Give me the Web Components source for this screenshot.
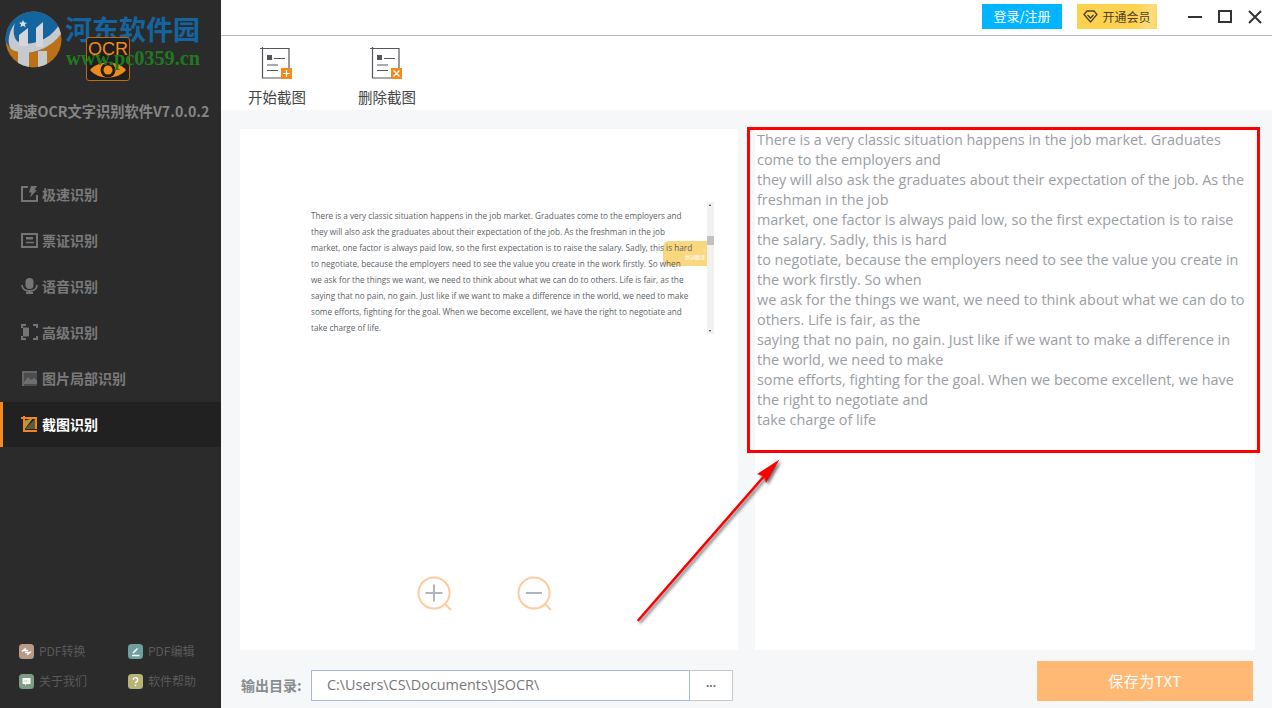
<!DOCTYPE html>
<html lang="zh">
<head>
<meta charset="utf-8">
<title>捷速OCR文字识别软件</title>
<style>
html,body{margin:0;padding:0;height:100%;overflow:hidden;background:#f6f7f9}
body{font-family:"Noto Sans CJK SC","Noto Sans",sans-serif}
</style>
</head>
<body>
<ocr-app>
  <side-bar slot="side">
    <nav-item label="极速识别" icon="fast"></nav-item>
    <nav-item label="票证识别" icon="card"></nav-item>
    <nav-item label="语音识别" icon="mic"></nav-item>
    <nav-item label="高级识别" icon="adv"></nav-item>
    <nav-item label="图片局部识别" icon="pic"></nav-item>
    <nav-item label="截图识别" icon="crop" active></nav-item>
  </side-bar>
  <title-bar slot="main"></title-bar>
  <tool-bar slot="main">
    <tool-button label="开始截图" kind="add"></tool-button>
    <tool-button label="删除截图" kind="del"></tool-button>
  </tool-bar>
  <work-area slot="main">
    <preview-panel></preview-panel>
    <result-panel>
There is a very classic situation happens in the job market. Graduates come to the employers and<br>they will also ask the graduates about their expectation of the job. As the freshman in the job<br>market, one factor is always paid low, so the first expectation is to raise the salary. Sadly, this is hard<br>to negotiate, because the employers need to see the value you create in the work firstly. So when<br>we ask for the things we want, we need to think about what we can do to others. Life is fair, as the<br>saying that no pain, no gain. Just like if we want to make a difference in the world, we need to make<br>some efforts, fighting for the goal. When we become excellent, we have the right to negotiate and<br>take charge of life
    </result-panel>
  </work-area>
  <foot-bar slot="main"></foot-bar>
</ocr-app>

<script>
function tpl(html){const t=document.createElement('template');t.innerHTML=html;return t;}
function def(name,html,init){
  const t=tpl(html);
  customElements.define(name,class extends HTMLElement{
    connectedCallback(){
      if(this.shadowRoot)return;
      const r=this.attachShadow({mode:'open'});
      r.appendChild(t.content.cloneNode(true));
      if(init)init.call(this,r);
    }
  });
}

def('ocr-app',`<style>
:host{display:grid;grid-template-columns:221px 1051px;width:1272px;height:708px;position:relative;overflow:hidden}
.main{display:flex;flex-direction:column;min-width:0;background:#f6f7f9}
.side{display:block;min-width:0}
.redbox{position:absolute;left:747px;top:127px;width:507px;height:320px;border:3px solid #f00;pointer-events:none}
.arrow{position:absolute;left:620px;top:440px;overflow:visible;pointer-events:none}
</style>
<div class="side"><slot name="side"></slot></div>
<div class="main"><slot name="main"></slot></div>
<div class="redbox"></div>
<svg class="arrow" width="180" height="190" viewBox="620 440 180 190" style="filter:drop-shadow(2px 2px 1.5px rgba(0,0,0,.55))">
  <path d="M638.5 620 L766 474" stroke="#f00" stroke-width="2.6" stroke-linecap="round" fill="none"/>
  <path d="M779.5 459.5 L757 474 L764 476.5 L766 483 Z" fill="#f00"/>
</svg>`);

def('side-bar',`<style>
:host{display:flex;flex-direction:column;width:221px;height:708px;background:#2b2b2b;position:relative;box-sizing:border-box}
.brand{height:171px;box-sizing:border-box;padding-top:100px;padding-left:9px;flex:none}
.title{font:700 14.250px/22px "Noto Sans CJK SC","Liberation Sans",sans-serif;color:#858585;white-space:nowrap}
.nav{flex:1;display:block}
.links{display:grid;grid-template-columns:109px 90px;grid-auto-rows:30px;padding:0 0 12px 19px;flex:none}
.link{display:flex;align-items:center;gap:5px;font:12px/16px "Noto Sans CJK SC","Liberation Sans",sans-serif;color:#5a5a5a;white-space:nowrap}
.logo{position:absolute;left:5px;top:11px}
.ocr{position:absolute;left:86px;top:37px;width:44px;height:44px;box-sizing:border-box;border:1px solid #c0690f;border-radius:3px;background:#1f1f1f;text-align:center;overflow:hidden}
.ocr b{display:block;font:400 18px/18px "Liberation Sans",sans-serif;color:#f08a1c;margin-top:2px;white-space:nowrap}
.ocr svg{display:block;margin:2px auto 0}
.wm1{position:absolute;left:65px;top:11px;font:700 27px/36px "Noto Sans CJK SC",sans-serif;color:#14659f;white-space:nowrap;letter-spacing:0}
.wm2{position:absolute;left:66px;top:47px;font:700 20.300px/22px "Liberation Serif",serif;color:#1f7a1f;white-space:nowrap}
svg{display:block;flex:none}
</style>
<div class="brand"><div class="title">捷速OCR文字识别软件V7.0.0.2</div></div>
<div class="nav"><slot></slot></div>
<div class="links">
  <div class="link"><svg width="15" height="15" viewBox="0 0 15 15"><rect width="15" height="15" rx="3.5" fill="#b89a86"/><path d="M3 7.500 6 5v1.500h3M12 7.500 9 10V8.500H6" stroke="#fff" stroke-width="1.500" fill="none"/></svg>PDF转换</div>
  <div class="link"><svg width="15" height="15" viewBox="0 0 15 15"><rect width="15" height="15" rx="3.500" fill="#6f9f9f"/><path d="M4 11.500h7.500M5 9l4.500-4.500" stroke="#fff" stroke-width="1.500" fill="none"/></svg>PDF编辑</div>
  <div class="link"><svg width="15" height="15" viewBox="0 0 15 15"><rect width="15" height="15" rx="3.500" fill="#7d9c85"/><path d="M3.500 4h8v6h-4L6 11.800V10H3.500Z" fill="#fff"/><path d="M5.500 7h4" stroke="#7d9c85" stroke-dasharray="1 .8"/></svg>关于我们</div>
  <div class="link"><svg width="15" height="15" viewBox="0 0 15 15"><rect width="15" height="15" rx="3.500" fill="#b8b478"/><path d="M5.300 5.800a2.200 2.200 0 1 1 3.400 1.800c-.8.500-1.200.9-1.200 1.700" stroke="#fff" stroke-width="1.400" fill="none"/><circle cx="7.500" cy="11.300" r=".9" fill="#fff"/></svg>软件帮助</div>
</div>
<svg class="logo" width="57" height="57" viewBox="0 0 57 57">
  <defs><clipPath id="c"><circle cx="28.500" cy="28.500" r="28"/></clipPath></defs>
  <g clip-path="url(#c)">
    <rect width="57" height="57" fill="#bb7115"/>
    <path d="M0 0H57V20C44 42 18 46 6 38L0 30Z" fill="#14659f"/>
    <path d="M10 12C3 22 2 32 6 38 18 46 44 42 58 20L55 12C46 30 22 37 12 30 8 26 8 18 10 12Z" fill="#c6c9ce"/>
    <rect x="13" y="40" width="11" height="18" fill="#c6c9ce"/>
    <rect x="33" y="40" width="9" height="18" fill="#c6c9ce"/>
    <path d="M14 24l9-7V35H14Z" fill="#d4d6da"/>
    <path d="M31 17l7-6V36H31Z" fill="#d4d6da"/>
    <path d="M18 9l1.200 2.500 2.800.2-2.100 1.800.7 2.700-2.600-1.500-2.600 1.500.7-2.700-2.100-1.800 2.800-.2Z" fill="#d8dde2"/>
  </g>
</svg>
<div class="wm1">河东软件园</div>
<div class="ocr"><b>OCR</b><svg width="38" height="20" viewBox="0 0 38 20"><path d="M1 10C9 0 29 0 37 10 29 20 9 20 1 10Z" fill="#f08a1c"/><circle cx="19" cy="10" r="7.500" fill="#1f1f1f"/><circle cx="19" cy="10" r="4.500" fill="#f08a1c"/></svg></div>
<div class="wm2">www.pc0359.cn</div>`);

const navIcons={
 fast:'<path d="M7 1H1v14h15V9" stroke="#757575" stroke-width="2" fill="none"/><path d="M10 0h6l-2.500 4H16l-7 7.500L10.500 6.500H8Z" fill="#757575"/>',
 card:'<rect x="1" y="2" width="15" height="13" fill="none" stroke="#757575" stroke-width="2"/><rect x="5" y="5" width="7" height="2.500" fill="#757575"/><path d="M5 10.500h8" stroke="#757575" stroke-width="1.500"/>',
 mic:'<rect x="4.500" y="0" width="8" height="11" rx="4" fill="#757575"/><path d="M1 7c0 8 15 8 15 0" fill="none" stroke="#757575" stroke-width="1.800"/><path d="M8.500 12v3M5 15h7" stroke="#757575" stroke-width="2"/>',
 adv:'<path d="M5 1H1v3M1 12v3h4M12 1h4v3M16 12v3h-4" fill="none" stroke="#757575" stroke-width="2"/><rect x="2" y="3.500" width="6" height="9" fill="#757575"/>',
 pic:'<path d="M1 1h15v15H1Z" fill="#4d4d4d"/><path d="M1 1h15v2H3v13H1Z" fill="#666"/><path d="M3 12l4-5 3 3 3-2 3 2v4H3Z" fill="#6e6e6e"/>',
 crop:'<path d="M3 14V5l9-3z" fill="#b39a35"/><path d="M4 13 14 3v10Z" fill="#5e5c32"/><path d="M3 0v15h13M0 2h15v11" fill="none" stroke="#f0871c" stroke-width="2"/>'
};
def('nav-item',`<style>
:host{display:block;height:46px;box-sizing:border-box}
.row{display:flex;align-items:center;height:100%;padding:0 0 0 21px;gap:4px;font:700 14px/20px "Noto Sans CJK SC","Liberation Sans",sans-serif;color:#7a7a7a;white-space:nowrap;box-sizing:border-box}
:host([active]) .row{background:#212121;color:#fff;border-left:3px solid #f58a1f;padding:0 0 2px 18px}
:host([active]){height:45px;margin-top:1px}
svg{display:block;flex:none}
</style><div class="row"><svg width="17" height="16" viewBox="0 0 17 16"></svg><span></span></div>`,function(r){
  r.querySelector('span').textContent=this.getAttribute('label');
  r.querySelector('svg').innerHTML=navIcons[this.getAttribute('icon')];
});

def('title-bar',`<style>
:host{display:flex;align-items:flex-start;height:36px;box-sizing:border-box;background:#fff;border-bottom:1px solid #b4bccc;padding:4px 9px 0 761px;flex:none}
.login{width:80px;height:25px;background:#00b4ff;color:#fff;font:13px/23px "Noto Sans CJK SC",sans-serif;text-align:center;flex:none}
.vip{width:80px;height:25px;margin-left:15px;background:linear-gradient(100deg,#fed24c 70%,#fedc7d 90%,#fed65c);color:#4a4030;font:12px/23px "Noto Sans CJK SC",sans-serif;display:flex;align-items:center;justify-content:center;gap:4px;flex:none;padding-bottom:1px;box-sizing:border-box}
.ctrls{display:flex;margin-left:30px;gap:14px;padding-top:6px}
svg{display:block;flex:none}
</style>
<div class="login">登录/注册</div>
<div class="vip"><svg width="15" height="13" viewBox="0 0 15 13"><path d="M4 1h7l3 3.500-6.500 7.500L1 4.500Z" fill="none" stroke="#4a4030" stroke-width="1.300"/><path d="M4.500 5l3 3 3-3" fill="none" stroke="#4a4030" stroke-width="1.300"/></svg>开通会员</div>
<div class="ctrls">
<svg width="16" height="14" viewBox="0 0 16 14"><path d="M1 7h14" stroke="#333" stroke-width="2"/></svg>
<svg width="16" height="14" viewBox="0 0 16 14"><rect x="2" y="1" width="12" height="11" fill="none" stroke="#333" stroke-width="2"/></svg>
<svg width="16" height="14" viewBox="0 0 16 14"><path d="M2 1l12 12M14 1L2 13" stroke="#333" stroke-width="2"/></svg>
</div>`);

def('tool-bar',`<style>
:host{display:flex;height:74px;background:#fff;padding-left:1px;flex:none}
</style><slot></slot>`);

def('tool-button',`<style>
:host{display:flex;flex-direction:column;align-items:center;width:110px;padding-top:11px;box-sizing:border-box;font:14.500px/20px "Noto Sans CJK SC",sans-serif;color:#444}
svg{display:block;margin-left:-3px}
span{margin-top:7px;white-space:nowrap}
</style>
<svg width="34" height="33" viewBox="0 0 34 33">
 <path d="M1 1.500h4M3.500 0v31H30V1.500H5" fill="none" stroke="#55565c" stroke-width="1.200"/>
 <rect x="8" y="8" width="5" height="5" fill="#55565c"/>
 <path d="M15 11.500h11M8 18h11M8 23.500h11" stroke="#55565c" stroke-width="1.200"/>
 <rect x="22" y="21" width="11" height="11" fill="#f5891f"/>
 <path class="g" stroke="#fff" stroke-width="1.200" fill="none"/>
</svg><span></span>`,function(r){
  r.querySelector('span').textContent=this.getAttribute('label');
  r.querySelector('.g').setAttribute('d',this.getAttribute('kind')==='add'?'M27.500 23v7M24 26.500h7':'M24.500 23.500l6 6M30.500 23.500l-6 6');
});

def('work-area',`<style>
:host{display:flex;gap:17px;padding:19px 17px 0 19px;flex:1;min-height:0;box-sizing:border-box}
</style><slot></slot>`);

def('preview-panel',`<style>
:host{display:flex;flex-direction:column;width:498px;background:#fff;box-sizing:border-box;padding:73px 0 38px 71px;flex:none;position:relative}
.doc{display:flex;height:132px;position:relative}
.txt{width:396px;padding-top:6px;box-sizing:border-box;font:8.200px/16px "Open Sans","Noto Sans",sans-serif;color:#5c5f66;white-space:nowrap;flex:none;position:relative;z-index:1}
.bar{width:7px;background:#f1f1f1;position:relative;flex:none}
.bar i{position:absolute;left:0;top:34px;width:7px;height:9px;background:#c1c1c1}
.bar::before{content:"";position:absolute;left:2px;top:2px;border:1.500px solid transparent;border-bottom:2px solid #333;border-top:0}
.bar::after{content:"";position:absolute;left:2px;bottom:2px;border:1.500px solid transparent;border-top:2px solid #333;border-bottom:0}
.tab{position:absolute;left:352px;top:39px;width:44px;height:25px;background:#f9d77e;border-radius:6px 0 0 6px;color:#fff;font:5px/7px "Noto Sans CJK SC",sans-serif;text-align:right;padding:5px 2px 0 0;box-sizing:border-box;white-space:nowrap}
.zoom{display:flex;gap:64px;margin-top:auto;padding-left:106px}
svg{display:block}
</style>
<div class="doc">
<div class="txt">There is a very classic situation happens in the job market. Graduates come to the employers and<br>they will also ask the graduates about their expectation of the job. As the freshman in the job<br>market, one factor is always paid low, so the first expectation is to raise the salary. Sadly, this is hard<br>to negotiate, because the employers need to see the value you create in the work firstly. So when<br>we ask for the things we want, we need to think about what we can do to others. Life is fair, as the<br>saying that no pain, no gain. Just like if we want to make a difference in the world, we need to make<br>some efforts, fighting for the goal. When we become excellent, we have the right to negotiate and<br>take charge of life.</div>
<div class="bar"><i></i></div>
<div class="tab">:<br>划词翻译</div>
</div>
<div class="zoom">
<svg width="36" height="36" viewBox="0 0 36 36"><circle cx="17" cy="17" r="15.500" fill="none" stroke="#ffcb9c" stroke-width="2"/><path d="M28 28l6 6" stroke="#ffcb9c" stroke-width="2"/><path d="M8.500 17h17M17 8.500v17" stroke="#b0b4bc" stroke-width="2"/></svg>
<svg width="36" height="36" viewBox="0 0 36 36"><circle cx="17" cy="17" r="15.500" fill="none" stroke="#ffcb9c" stroke-width="2"/><path d="M28 28l6 6" stroke="#ffcb9c" stroke-width="2"/><path d="M9 17h16" stroke="#b0b4bc" stroke-width="2"/></svg>
</div>`);

def('result-panel',`<style>
:host{display:block;width:500px;background:#fff;box-sizing:border-box;padding:1px 3px 0 2px;font:14.400px/20px "Open Sans","Noto Sans",sans-serif;color:#9a9da3;flex:none}
</style><slot></slot>`);

def('foot-bar',`<style>
:host{display:flex;height:58px;box-sizing:border-box;padding:20px 19px 7px 20px;flex:none;align-items:flex-start}
.lab{font:700 14px/30px "Noto Sans CJK SC",sans-serif;color:#888c90;width:70px;flex:none;white-space:nowrap}
.inp{width:379px;height:31px;box-sizing:border-box;border:1px solid #a9b9d6;background:#fff;font:14.400px/28px "Open Sans","Noto Sans",sans-serif;color:#777;padding-left:15px;flex:none}
.more{width:43px;height:31px;box-sizing:border-box;border:1px solid #c6c8cc;border-left:0;background:#fff;color:#666f80;font:700 12px/25px "Liberation Sans",sans-serif;text-align:center;flex:none}
.save{margin-left:304px;margin-top:-9px;width:216px;height:40px;background:#ffb974;color:#fff;font:15px/39px "Noto Sans CJK SC",sans-serif;letter-spacing:.4px;text-align:center;flex:none}
</style>
<div class="lab">输出目录:</div>
<div class="inp">C:\\Users\\CS\\Documents\\JSOCR\\</div>
<div class="more">...</div>
<div class="save">保存为TXT</div>`);
</script>
</body>
</html>
